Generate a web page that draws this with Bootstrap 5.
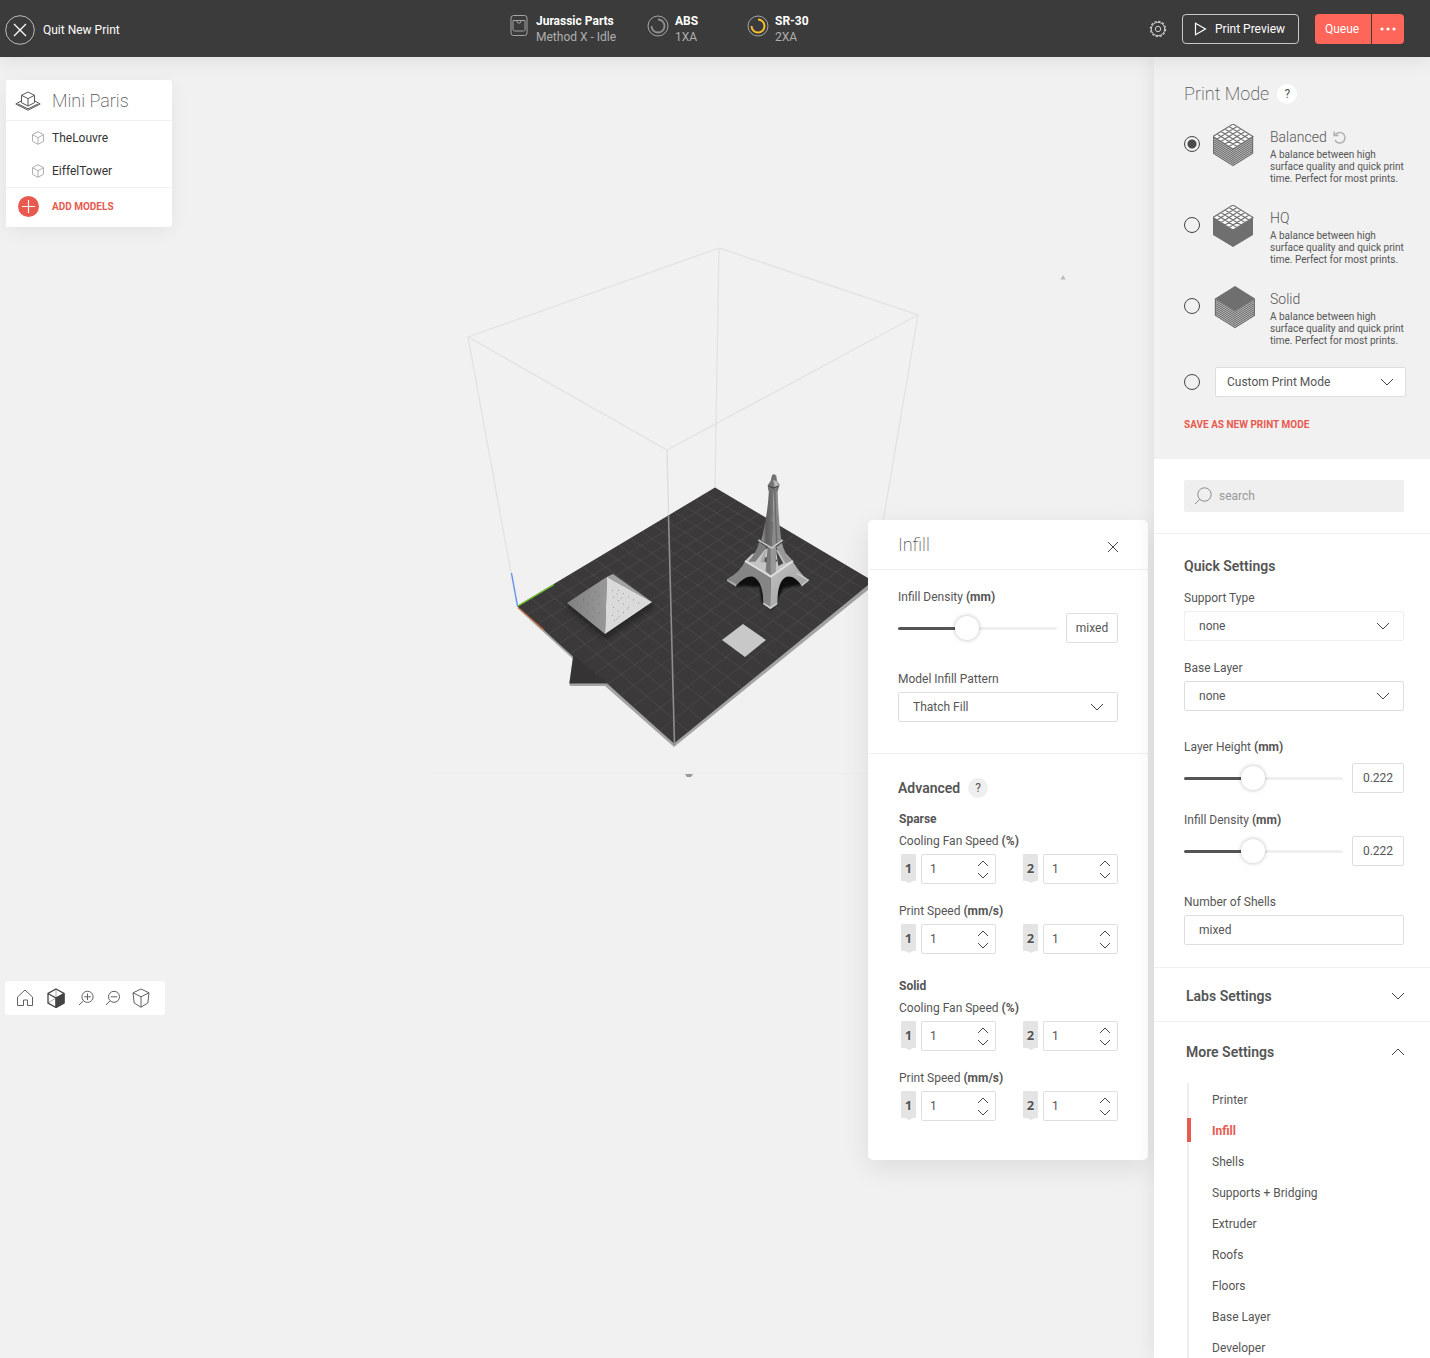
<!DOCTYPE html>
<html lang="en">
<head>
<meta charset="utf-8">
<meta name="viewport" content="width=device-width, initial-scale=1">
<title>Mini Paris – New Print</title>
<link rel="stylesheet" href="https://cdn.jsdelivr.net/npm/bootstrap@5.3.0/dist/css/bootstrap.min.css">
<style>
  :root { --ink:#555; --line:#f0f0f0; --edge:#dedede; --accent:#e85a4f; --hot:#ff665a; --bar:#3b3b3b; }
  body { font-family:Roboto,"Liberation Sans",sans-serif; font-size:12px; line-height:16px; color:var(--ink); background:#f1f1f1; }
  svg { display:block; flex:none; fill:none; stroke:currentColor; }
  button { font:inherit; color:inherit; }
  .ic-soft { color:#b0b0b0; }
  .ic-dark { color:#444; }
  .ic-white { color:#fff; }
  .ic-dots { fill:#fff; stroke:none; }
  .plain-btn { border:0; background:none; padding:0; }
  .thin-title { font-size:18px; line-height:20px; font-weight:200; margin:0; }
  .strong-title { font-size:14px; line-height:20px; font-weight:600; margin:0; }
  .unit { font-weight:700; }

  .topbar { height:57px; background:var(--bar); color:#fff; padding-right:26px; box-shadow:0 4px 20px rgba(0,0,0,.08); z-index:5; }
  .topbar-start { flex:0 0 510px; padding:2px 0 0 5px; }
  .quit-link { color:#fff; text-decoration:none; gap:8px; }
  .status-item { gap:6px; min-width:100px; color:#a5a5a5; }
  .status-printer { gap:8px; width:137px; }
  .status-item b { color:#fff; display:block; }
  .status-item span { color:#b0b0b0; }
  .preview-btn { height:30px; width:117px; border:1px solid #c8c8c8; border-radius:4px; background:none; color:#fff; padding:0 0 0 11px; gap:8px; margin:0 16px 0 15px; }
  .queue-btn { height:30px; background:var(--hot); color:#fff; border:0; padding:0; }
  .queue-main { width:56px; border-radius:4px 0 0 4px; margin-right:1px; padding-right:2px; }
  .queue-more { width:32px; border-radius:0 4px 4px 0; }

  .stage { min-width:0; }
  .scene { inset:0; width:100%; height:100%; }
  .float-card { background:#fff; position:absolute; }
  .models-card { left:6px; top:23px; width:166px; border-radius:0 3px 3px 0; box-shadow:0 4px 20px rgba(0,0,0,.06); }
  .models-head { height:41px; padding:1px 0 0 9px; gap:11px; border-bottom:1px solid var(--line); }
  .model-row { height:33px; padding-left:25px; gap:7px; color:#333; text-decoration:none; }
  .add-row { height:40px; width:100%; padding:0 0 2px 12px; gap:13px; border-top:1px solid var(--line); }
  .accent-caps { color:var(--accent); font-size:10px; line-height:12px; font-weight:700; text-decoration:none; }
  .view-tools { left:5px; top:924px; width:160px; height:34px; border-radius:3px; padding-left:11px; gap:12px; color:#606060; }

  .infill-card { right:6px; top:463px; width:280px; border-radius:5px; box-shadow:0 8px 28px rgba(0,0,0,.09); }
  .infill-head { height:50px; padding:0 29px 0 30px; border-bottom:1px solid var(--line); }
  .infill-main { padding:19px 30px 31px; border-bottom:1px solid var(--line); }
  .infill-more { padding:24px 30px 39px; }
  .help-dot { width:20px; height:20px; border-radius:50%; background:#efefef; border:0; padding:0; font-size:12px; line-height:20px; }

  .field-box { display:block; height:30px; width:100%; border:1px solid var(--edge); border-radius:2px; background-color:#fff; color:var(--ink); font-size:12px; padding:0 14px; box-shadow:none; }
  select.field-box { appearance:none; background-repeat:no-repeat; background-position:right 13px center; padding-top:0;
    background-image:url("data:image/svg+xml,%3Csvg xmlns='http://www.w3.org/2000/svg' width='14' height='8' fill='none' stroke='%23444'%3E%3Cpath d='M1 1l6 6 6-6'/%3E%3C/svg%3E"); }
  .pale-edge { border-color:#efefef; }
  .value-box { width:52px; flex:none; padding:0; text-align:center; }
  .slide-row { gap:9px; margin-top:8px; }
  .gap-xs { margin-top:5px; }
  .gap-s { margin-top:6px; }
  .gap-m { margin-top:14px; }
  .gap-l { margin-top:19px; }
  .gap-xl { margin-top:28px; }
  .slider { appearance:none; flex:1 1 0; min-width:0; height:28px; background:none; margin:0; padding:0; }
  .slider::-webkit-slider-runnable-track { height:3px; border-radius:2px; background:linear-gradient(to right,#555 var(--fill),#efefef var(--fill)); }
  .slider::-webkit-slider-thumb { appearance:none; width:24px; height:24px; margin-top:-11px; border-radius:50%; background:#fff; border:0; box-shadow:0 0 4px rgba(0,0,0,.28); }
  .slider::-moz-range-track { height:3px; background:linear-gradient(to right,#555 var(--fill),#efefef var(--fill)); }

  .advanced-fields { padding-left:1px; }
  .block-title { font-weight:700; margin-top:13px; }
  .pair-row + .block-title { margin-top:24px; }
  .pair-row { padding-left:2px; gap:5px; margin-top:5px; }
  .tool-tag { position:relative; width:15px; height:27px; background:#e4e4e4; border-radius:1px; text-align:center; font:700 13px/29px "Noto Sans",sans-serif; text-shadow:0 0 2px #fff; }
  .tool-tag::after { content:""; position:absolute; left:4px; top:27px; border:solid transparent; border-width:2px 4px 0; border-top-color:#e4e4e4; }
  .tool-tag + .spin-box + .tool-tag { margin-left:auto; }
  .spin-box { width:75px; height:30px; border:1px solid var(--edge); border-radius:2px; padding:0 6px 0 8px; }
  .spin-box input { border:0; padding:0; width:36px; color:var(--ink); background:none; appearance:textfield; }
  .spin-box input::-webkit-inner-spin-button { display:none; }
  .spin-keys { gap:5px; }

  .settings-pane { width:276px; flex:none; background:#fff; box-shadow:0 0 20px rgba(0,0,0,.09); z-index:1; }
  .mode-pane { background:#f1f1f1; padding:27px 24px 28px 30px; }
  .mode-list { padding-top:25px; gap:25px; }
  .mode-row { height:56px; gap:13px; cursor:pointer; }
  .mode-row svg.mode-cube { margin:-5px 2px 0 0; color:#6f6f6f; }
  .mode-name { font-size:14px; font-weight:300; line-height:16px; gap:6px; }
  .mode-note { font-size:10px; line-height:12px; margin-top:4px; }
  .mode-radio { appearance:none; flex:none; width:16px; height:16px; border:1px solid #444; border-radius:50%; margin:0; }
  .mode-row .mode-radio { margin-top:7px; }
  .mode-radio:checked { background:radial-gradient(circle,#4a4a4a 4px,transparent 5px); }
  .custom-row { gap:15px; margin-top:20px; }
  .custom-row .field-box { padding:0 11px; background-position:right 11px center; }
  .save-link { margin-top:22px; }
  .search-field { height:32px; background:#efefef; border-radius:2px; padding-left:10px; gap:7px; color:#8a8a8a; }
  .search-field input { border:0; background:none; padding:0; min-width:0; flex:1; outline:0; }
  .search-field input::placeholder { color:#999; }
  .search-pane { padding:21px 26px 21px 30px; border-bottom:1px solid var(--line); }
  .quick-pane { padding:22px 26px 22px 30px; border-bottom:1px solid var(--line); }
  .fold-head { width:100%; padding:18px 25px 15px 32px; }
  .fold-line { border-bottom:1px solid var(--line); }
  .more-head { padding-top:20px; padding-bottom:21px; }
  .more-list { margin:0 0 0 33px; padding:1px 0 0; border-left:2px solid #eee; list-style:none; }
  .more-list a { display:flex; align-items:center; height:31px; padding-left:23px; color:var(--ink); text-decoration:none; position:relative; }
  .more-list a.active { color:var(--accent); font-weight:700; }
  .more-list a.active::before { content:""; position:absolute; left:-2px; top:3px; width:4px; height:24px; background:var(--accent); }
</style>
</head>
<body class="vh-100 overflow-hidden d-flex flex-column">

<svg width="0" height="0" class="position-absolute" aria-hidden="true">
  <defs>
    <g id="cube-grid"><path d="M20 0L40 12.500 20 25 0 12.500z" fill="#fafafa" stroke="none"/>
      <g transform="matrix(4 2.500 -4 2.500 20 0)"><path vector-effect="non-scaling-stroke" stroke-width="1.100" d="M0 0H5V5H0zM1 0V5M2 0V5M3 0V5M4 0V5M0 1H5M0 2H5M0 3H5M0 4H5"/></g></g>
    <path id="cube-layers" stroke-width="1.400" d="M0 13l20 12.500L40 13M0 15l20 12.500L40 15M0 17l20 12.500L40 17M0 19l20 12.500L40 19M0 21l20 12.500L40 21M0 23l20 12.500L40 23M0 25l20 12.500L40 25M0 27l20 12.500L40 27M0 29l20 12.500L40 29M.5 12.500V29M39.500 12.500V29"/>
    <g id="mini-cube"><path d="M7 .7l5.500 3v6.600l-5.500 3-5.500-3V3.700zM1.500 3.700L7 6.700l5.500-3M7 6.700v6.600"/></g>
    <path id="caret-up" d="M1 6l5-5 5 5"/>
    <path id="caret-down" d="M1 1l5 5 5-5"/>
  </defs>
</svg>

<header class="topbar d-flex align-items-center position-relative flex-shrink-0">
  <div class="topbar-start d-flex">
    <a href="#" class="quit-link d-flex align-items-center">
      <svg width="30" height="30"><circle cx="15" cy="15" r="14.300" stroke="#bbb"/><path d="M9 9l12 12M21 9L9 21" stroke="#fff" stroke-width="1.300"/></svg>
      Quit New Print
    </a>
  </div>
  <div class="d-flex">
    <div class="status-item status-printer d-flex">
      <svg width="18" height="24"><rect x="1" y="2.500" width="16" height="20" rx="2.500"/><path d="M3 7.500h12v9a1.500 1.500 0 0 1-1.500 1.500h-9A1.500 1.500 0 0 1 3 16.500zM7 8v1l1 1h2l1-1V8"/></svg>
      <div><b>Jurassic Parts</b><span>Method X - Idle</span></div>
    </div>
    <div class="status-item d-flex">
      <svg width="22" height="24"><circle cx="11" cy="13" r="10"/><path d="M11 6.500a6.500 6.500 0 1 1-6.500 6.500" stroke-width="1.800" stroke="#909090"/></svg>
      <div><b>ABS</b><span>1XA</span></div>
    </div>
    <div class="status-item d-flex">
      <svg width="22" height="24"><circle cx="11" cy="13" r="10"/><path d="M11 6.500a6.500 6.500 0 1 1-6.500 6.500" stroke-width="2" stroke="#fbbf2d"/></svg>
      <div><b>SR-30</b><span>2XA</span></div>
    </div>
  </div>
  <div class="d-flex align-items-center ms-auto">
    <button class="plain-btn" aria-label="Settings"><svg class="ic-soft" width="18" height="18"><g stroke="#ccc"><circle cx="9" cy="9" r="2.700"/><circle cx="9" cy="9" r="6.700"/><circle cx="9" cy="9" r="7.600" stroke-width="1.200" stroke-dasharray="2.300 1.679"/></g></svg></button>
    <button class="preview-btn d-flex align-items-center"><svg class="ic-white" width="13" height="14" stroke-width="1.200"><path d="M1.500 1.200v11.600L11.500 7z"/></svg>Print Preview</button>
    <button class="queue-btn queue-main">Queue</button>
    <button class="queue-btn queue-more d-flex align-items-center justify-content-center" aria-label="More actions"><svg class="ic-dots" width="16" height="4"><circle cx="2" cy="2" r="1.600"/><circle cx="8" cy="2" r="1.600"/><circle cx="14" cy="2" r="1.600"/></svg></button>
  </div>
</header>

<div class="d-flex flex-grow-1 overflow-hidden">
  <main class="stage flex-grow-1 position-relative">
    <svg class="scene position-absolute" viewBox="0 57 1154 1301" preserveAspectRatio="xMinYMin meet" role="img" aria-label="Build plate preview">
      <defs>
        <linearGradient id="pyr" x1="0" x2="1"><stop stop-color="#808080"/><stop offset="1" stop-color="#989898"/></linearGradient>
        <linearGradient id="shaftA" x1="0" x2="1"><stop stop-color="#9a9a9a"/><stop offset=".4" stop-color="#5d5d5d"/><stop offset="1" stop-color="#777"/></linearGradient>
        <linearGradient id="pale" x1="0" x2="1" y2="1"><stop stop-color="#c2c2c2"/><stop offset="1" stop-color="#979797"/></linearGradient>
        <filter id="soft" x="-30%" y="-30%" width="160%" height="160%"><feGaussianBlur stdDeviation="3"/></filter>
      </defs>
      <g stroke="#e2e2e2" stroke-width="1.300">
        <path d="M468 337L719 248 918 315 667 450zM468 337L517 606M719 248L715 488M918 315L873 581"/>
        <path d="M430 773.500H868" stroke="#ededed" stroke-width="1"/>
      </g>
      <path stroke="none" fill="#a4a4a4" d="M517 608L573 659 569 683 570 686H605L674 747 874 585V580L674 740z"/>
      <path stroke="none" fill="#3b393a" d="M715 487.500L873 581 674 743.500 607 683.500H569.500L573 656.500 517 606z"/>
      <g id="bed-grid" stroke="#5b5a5b" stroke-opacity=".55" stroke-width=".8"></g>
      <path stroke="none" fill="#353334" d="M574 656L607 683H570z"/>
      <path stroke="#5b8ff0" stroke-width="1.300" d="M511.500 573L517.500 606"/>
      <path stroke="#6fd02a" stroke-width="1.300" d="M518 606L554 584.500"/>
      <path stroke="#b0623c" stroke-width="1.300" d="M518 607.500L544 630"/>
      <g stroke="none">
        <path d="M566 606L605 638 654 605 610 590z" fill="#111" opacity=".6" filter="url(#soft)"/>
        <path d="M567 603L607 577 605 634z" fill="url(#pyr)"/>
        <path d="M567 603L613 574 607 577z" fill="#999"/>
        <path d="M607 577L613 574 652 602z" fill="#a3a3a3"/>
        <path d="M607 577L652 602 605 634z" fill="#dadada"/>
        <path d="M722 640L743 624 766 640 745 657z" fill="#c8c8c8"/>
      </g>
      <path stroke="#707070" stroke-dasharray="1 6" d="M577 603L599 590M581 608L602 594M587 612L603 601M593 617L603 610M583 600l16 14"/>
      <path stroke="#888" stroke-dasharray="1 5" d="M612 590L625 601M613 597l18 12M613 607l9 7M612 615l6 5M618 590l22 14M614 621l16-14"/>
      <g transform="translate(500 460) scale(.33333)" stroke="none">
        <path d="M700 378L740 340 812 350 880 345 915 372 850 385 815 450 785 425 780 380z" fill="#050505" opacity=".75" filter="url(#soft)"/>
        <path d="M755 283L812 262 860 283 878 303 812 350 735 303z" fill="#c4c4c4"/>
        <path d="M785 300q25-22 48 2l-20 14z" fill="#555"/>
        <path d="M778 246L800 262 766 305 745 305Q768 280 778 246z" fill="#7d7d7d"/>
        <path d="M800 262L792 310 780 305z" fill="#a9a9a9"/>
        <path d="M846 248L828 262 856 310 876 303Q852 280 846 248z" fill="#999"/>
        <path d="M803 260H828L826 338 812 346 797 334z" fill="#787878"/>
        <path d="M812 262L828 260 826 338 812 346z" fill="#989898"/>
        <path d="M828 270L850 310 835 318z" fill="#444"/>
        <path d="M807 88H822L815 262 784 240Q803 170 807 88z" fill="url(#shaftA)"/>
        <path d="M822 88H833Q834 170 844 240L815 262z" fill="#8b8b8b"/>
        <path d="M824 92L830 252" stroke="#6a6a6a" stroke-width="4"/>
        <path d="M775 240L815 264 848 240" fill="none" stroke="#c6c6c6" stroke-width="5"/>
        <path d="M816 46L822 42 829 47 831 62 839 74 833 94 805 92 803 76 812 62z" fill="#737373"/>
        <path d="M820 60L831 64 837 76 825 86z" fill="#b8b8b8"/><path d="M805 78L820 84 836 78" fill="none" stroke="#444" stroke-width="4"/>
        <path d="M735 304L812 352 810 448 790 432Q790 365 760 350Q735 345 708 378L681 358Q722 335 735 304z" fill="#858585"/>
        <path d="M681 358L708 372V380L681 363z" fill="#aaa"/>
        <path d="M812 352L878 304Q895 335 925 361L905 378Q885 345 860 350Q832 360 832 432L810 448z" fill="url(#pale)"/>
        <path d="M735 303L812 350 879 303" fill="none" stroke="#e2e2e2" stroke-width="5"/>
        <path d="M890 340L925 360 905 377" fill="none" stroke="#ccc" stroke-width="4"/>
        <path d="M790 430L812 444 831 430" fill="none" stroke="#cfcfcf" stroke-width="5"/>
      </g>
      <path stroke="#dcdcdc" stroke-width="1.300" d="M667 450L668.500 515"/>
      <path stroke="#8e8e8e" stroke-width="1.600" d="M668.500 515L674.500 745"/>
      <path stroke="none" fill="#9a9a9a" d="M685 774H693L691 777H687z"/>
      <path stroke="none" fill="#bbb" d="M1060.500 279.500L1063 275 1065.500 279.500z"/>
    </svg>

    <section class="float-card models-card">
      <div class="models-head d-flex align-items-center">
        <svg width="26" height="20"><path d="M13 1l6.500 3.300v7.400L13 15l-6.500-3.300V4.300zM6.500 4.300L13 7.600l6.500-3.300M13 7.600V15M6.500 9.800L.8 13 13 19.200 25.200 13l-5.700-3.200M3 13l10 4.800L23 13"/></svg>
        <h1 class="thin-title">Mini Paris</h1>
      </div>
      <a href="#" class="model-row d-flex align-items-center"><svg class="ic-soft" width="14" height="14"><use href="#mini-cube"/></svg>TheLouvre</a>
      <a href="#" class="model-row d-flex align-items-center"><svg class="ic-soft" width="14" height="14"><use href="#mini-cube"/></svg>EiffelTower</a>
      <button class="plain-btn add-row d-flex align-items-center">
        <svg width="21" height="21"><circle cx="10.500" cy="10.500" r="10.500" fill="#e85a4f" stroke="none"/><path d="M10.500 4v13M4 10.500h13" stroke="#fff" stroke-width="1.200"/></svg>
        <span class="accent-caps">ADD MODELS</span>
      </button>
    </section>

    <div class="float-card view-tools d-flex align-items-center">
      <button class="plain-btn" aria-label="Home view"><svg width="18" height="18"><path d="M1.500 8L9 1l7.500 7v8.500h-5v-5.500h-4v5.500h-6z"/></svg></button>
      <button class="plain-btn" aria-label="Solid view"><svg class="ic-dark" width="20" height="20"><path d="M10 10l8-4.500v9.500l-8 4.500z" fill="#444"/><path d="M10 1v9L2 15" stroke="#aaa"/><path d="M10 1l8 4.500V15l-8 4.500L2 15V5.500zM2 5.500L10 10l8-4.500M10 10v9.500" stroke-width="1.300"/></svg></button>
      <button class="plain-btn" aria-label="Zoom in"><svg width="16" height="16"><circle cx="9.500" cy="6.800" r="5.600"/><path d="M5.500 10.800L1 15M9.500 3.500v6.600M6.200 6.800h6.600"/></svg></button>
      <button class="plain-btn" aria-label="Zoom out"><svg width="14" height="16"><circle cx="8" cy="6.800" r="5.500"/><path d="M4 10.800L0 15M4.700 6.800h6.600"/></svg></button>
      <button class="plain-btn" aria-label="Perspective"><svg width="18" height="20"><path d="M9 1l8 3.800-1.200 10.200L9 19.200 2.200 15 1 4.800zM1 4.800l8 4 8-4M9 8.800v10.400"/></svg></button>
    </div>

    <section class="float-card infill-card">
      <div class="infill-head d-flex align-items-center justify-content-between">
        <h2 class="thin-title">Infill</h2>
        <button class="plain-btn pt-1" aria-label="Close"><svg class="ic-dark" width="12" height="12"><path d="M1 1l10 10M11 1L1 11"/></svg></button>
      </div>
      <div class="infill-main">
        <label class="d-block" for="p-density">Infill Density <span class="unit">(mm)</span></label>
        <div class="slide-row d-flex align-items-center">
          <input class="slider" id="p-density" type="range" value="42" style="--fill:42%">
          <input class="field-box value-box" aria-label="Infill density value" value="mixed">
        </div>
        <label class="d-block gap-xl" for="p-pattern">Model Infill Pattern</label>
        <select class="field-box gap-xs" id="p-pattern"><option>Thatch Fill</option></select>
      </div>
      <div class="infill-more">
        <div class="d-flex align-items-center"><h3 class="strong-title">Advanced</h3><button class="help-dot ms-2" aria-label="Help">?</button></div>
        <div class="advanced-fields" id="advanced-fields"></div>
      </div>
    </section>
  </main>

  <aside class="settings-pane overflow-hidden">
    <section class="mode-pane">
      <div class="d-flex align-items-center"><h2 class="thin-title">Print Mode</h2><button class="help-dot bg-white ms-2" aria-label="Help">?</button></div>
      <div class="mode-list d-flex flex-column">
        <label class="mode-row d-flex align-items-start"><input class="mode-radio" type="radio" name="mode" checked>
          <svg class="mode-cube" width="42" height="43"><use href="#cube-layers"/><use href="#cube-grid"/></svg>
          <span><span class="mode-name d-flex align-items-center">Balanced <svg class="ic-soft" width="13" height="13" stroke-width="1.500"><path d="M2.500 3.500A5.300 5.300 0 1 1 2 9.200M1.200.6v4h4.300"/></svg></span><span class="mode-note d-block">A balance between high surface quality and quick print time. Perfect for most prints.</span></span></label>
        <label class="mode-row d-flex align-items-start"><input class="mode-radio" type="radio" name="mode">
          <svg class="mode-cube" width="42" height="43"><path d="M0 12.500L20 25 40 12.500V30L20 42 0 30z" fill="#6f6f6f" stroke="none"/><use href="#cube-grid"/></svg>
          <span><span class="mode-name d-flex align-items-center">HQ</span><span class="mode-note d-block">A balance between high surface quality and quick print time. Perfect for most prints.</span></span></label>
        <label class="mode-row d-flex align-items-start"><input class="mode-radio" type="radio" name="mode">
          <svg class="mode-cube" width="42" height="43"><g transform="translate(2 0)"><use href="#cube-layers"/><path d="M20 0L40 12.500 20 25 0 12.500z" fill="#6f6f6f" stroke="none"/></g></svg>
          <span><span class="mode-name d-flex align-items-center">Solid</span><span class="mode-note d-block">A balance between high surface quality and quick print time. Perfect for most prints.</span></span></label>
      </div>
      <div class="custom-row d-flex align-items-center">
        <input class="mode-radio" type="radio" name="mode" aria-label="Custom print mode">
        <select class="field-box" aria-label="Custom print mode list"><option>Custom Print Mode</option></select>
      </div>
      <a href="#" class="accent-caps save-link d-block">SAVE AS NEW PRINT MODE</a>
    </section>
    <section class="search-pane">
      <label class="search-field d-flex align-items-center">
        <svg width="18" height="18"><circle cx="10.500" cy="7.500" r="6.700"/><path d="M5.800 12.300L1 17"/></svg>
        <input type="search" placeholder="search" aria-label="Search settings">
      </label>
    </section>
    <section class="quick-pane">
      <h3 class="strong-title">Quick Settings</h3>
      <label class="d-block gap-m" for="q-support">Support Type</label>
      <select class="field-box pale-edge gap-xs" id="q-support"><option>none</option></select>
      <label class="d-block gap-l" for="q-base">Base Layer</label>
      <select class="field-box gap-xs" id="q-base"><option>none</option></select>
      <label class="d-block gap-xl" for="q-height">Layer Height <span class="unit">(mm)</span></label>
      <div class="slide-row d-flex align-items-center">
        <input class="slider" id="q-height" type="range" value="42" style="--fill:42%">
        <input class="field-box value-box" aria-label="Layer height value" value="0.222">
      </div>
      <label class="d-block gap-l" for="q-density">Infill Density <span class="unit">(mm)</span></label>
      <div class="slide-row d-flex align-items-center">
        <input class="slider" id="q-density" type="range" value="42" style="--fill:42%">
        <input class="field-box value-box" aria-label="Infill density value" value="0.222">
      </div>
      <label class="d-block gap-xl" for="q-shells">Number of Shells</label>
      <input class="field-box gap-xs" id="q-shells" value="mixed">
    </section>
    <button class="plain-btn fold-head fold-line d-flex align-items-center justify-content-between"><span class="strong-title">Labs Settings</span><svg class="ic-dark" width="14" height="8"><path d="M1 1l6 6 6-6"/></svg></button>
    <button class="plain-btn fold-head more-head d-flex align-items-center justify-content-between" aria-expanded="true"><span class="strong-title">More Settings</span><svg class="ic-dark" width="14" height="8"><path d="M1 7l6-6 6 6"/></svg></button>
    <ul class="more-list">
      <li><a href="#">Printer</a></li><li><a href="#" class="active">Infill</a></li><li><a href="#">Shells</a></li>
      <li><a href="#">Supports + Bridging</a></li><li><a href="#">Extruder</a></li><li><a href="#">Roofs</a></li>
      <li><a href="#">Floors</a></li><li><a href="#">Base Layer</a></li><li><a href="#">Developer</a></li>
    </ul>
  </aside>
</div>

<script src="https://cdn.jsdelivr.net/npm/bootstrap@5.3.0/dist/js/bootstrap.bundle.min.js"></script>
<script>
  // Perspective grid on the build plate: maps the unit square onto the plate's corners.
  (function () {
    const [x0,y0,x1,y1,x2,y2,x3,y3] = [517,606, 715,488, 873,581, 674,743];
    const dx1=x1-x2, dx2=x3-x2, sx=x0-x1+x2-x3, dy1=y1-y2, dy2=y3-y2, sy=y0-y1+y2-y3;
    const det=dx1*dy2-dx2*dy1, g=(sx*dy2-dx2*sy)/det, h=(dx1*sy-sx*dy1)/det;
    const pt=(u,v)=>{ const w=g*u+h*v+1;
      return ((x1-x0+g*x1)*u+(x3-x0+h*x3)*v+x0)/w+' '+((y1-y0+g*y1)*u+(y3-y0+h*y3)*v+y0)/w; };
    let d='';
    for (let i=1;i<17;i++) d+='M'+pt(i/17,0)+'L'+pt(i/17,1);
    for (let j=1;j<13;j++) d+='M'+pt(0,j/13)+'L'+pt(1,j/13);
    document.getElementById('bed-grid').innerHTML='<path d="'+d+'"/>';
  })();

  // Per-extruder fields of the Advanced block.
  const spin = (name, n) => `<span class="tool-tag">${n}</span>
    <div class="spin-box d-flex align-items-center justify-content-between">
      <input type="number" value="1" aria-label="${name}, extruder ${n}">
      <div class="spin-keys d-flex flex-column">
        <button class="plain-btn" aria-label="Increase"><svg class="ic-dark" width="12" height="7"><use href="#caret-up"/></svg></button>
        <button class="plain-btn" aria-label="Decrease"><svg class="ic-dark" width="12" height="7"><use href="#caret-down"/></svg></button>
      </div></div>`;
  const field = (name, unit, gap) => `<div class="${gap}">${name} <span class="unit">${unit}</span></div>
    <div class="pair-row d-flex">${spin(name,1)}${spin(name,2)}</div>`;
  document.getElementById('advanced-fields').innerHTML = ['Sparse','Solid'].map(t =>
    `<div class="block-title">${t}</div>` +
    field('Cooling Fan Speed','(%)','gap-s') + field('Print Speed','(mm/s)','gap-l')).join('');
</script>
</body>
</html>
